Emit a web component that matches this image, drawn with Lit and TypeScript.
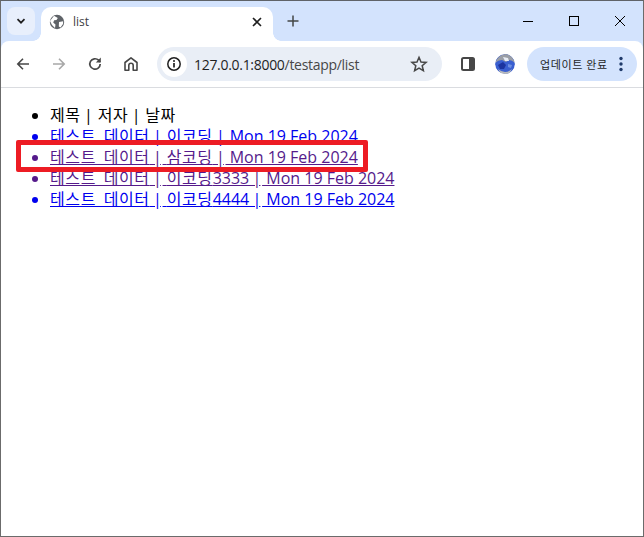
import { LitElement, html, css } from "lit";
import { customElement } from "lit/decorators.js";

const rows = [
  { t: "테스트 데이터 | 이코딩 | Mon 19 Feb 2024", v: false },
  { t: "테스트 데이터 | 삼코딩 | Mon 19 Feb 2024", v: true, mark: true },
  { t: "테스트 데이터 | 이코딩3333 | Mon 19 Feb 2024", v: true },
  { t: "테스트 데이터 | 이코딩4444 | Mon 19 Feb 2024", v: false },
];

/* Hangul runs and pipes get their own spacing classes, to approximate the reference's Korean UI font metrics. */
function spaced(text: string) {
  return text.split(/([\uac00-\ud7a3]+(?: [\uac00-\ud7a3]+)*|\|)/).filter(Boolean).map((part) => {
    if (part === "|") return html`<span class="p">|</span>`;
    if (/[\uac00-\ud7a3]/.test(part)) return html`<span class="h">${part}</span>`;
    return part;
  });
}

@customElement("app-root")
export class AppRoot extends LitElement {
  static styles = css`
    :host { display: block; width: 644px; height: 537px; font-family: "Open Sans", "Noto Sans CJK KR", sans-serif; }
    .win { box-sizing: border-box; width: 644px; height: 537px; border: 1px solid #6b6b6b; border-top-color: #5f6368; background: #d3e3fd; display: flex; flex-direction: column; overflow: hidden; }
    .tabs { height: 40px; display: flex; align-items: flex-start; flex: none; }
    .tablist { width: 28px; height: 28px; margin: 6px 0 0 6px; border-radius: 8px; background: #e8effc; display: flex; align-items: center; justify-content: center; flex: none; }
    .tab { position: relative; width: 232px; height: 34px; margin: 6px 0 0 6px; background: #fff; border-radius: 10px 10px 0 0; flex: none; }
    .tab::before, .tab::after { content: ""; position: absolute; bottom: 0; width: 8px; height: 8px; }
    .tab::before { left: -8px; background: radial-gradient(circle at 0 0, #d3e3fd 7.5px, #fff 8px); }
    .tab::after { right: -8px; background: radial-gradient(circle at 100% 0, #d3e3fd 7.5px, #fff 8px); }
    .tabrow { height: 29px; display: flex; align-items: center; }
    .tab .title { font-size: 12px; color: #3c4043; margin-left: 8px; flex: 1; }
    .tab .fav { margin-left: 8px; }
    .tab .x { margin-right: 8px; }
    .plus { margin: 13px 0 0 13px; flex: none; }
    .spacer { flex: 1; }
    .caps { display: flex; height: 40px; }
    .cap { width: 46px; height: 40px; display: flex; align-items: center; justify-content: center; }
    .toolbar { height: 46px; background: #fff; border-radius: 8px 8px 0 0; display: flex; align-items: center; flex: none; border-bottom: 1px solid #dadce0; }
    .tb { width: 34px; height: 34px; display: flex; align-items: center; justify-content: center; flex: none; }
    .nav { display: flex; margin-left: 5px; gap: 2px; }
    .omni { height: 34px; width: 285px; margin-left: 9px; border-radius: 17px; background: #e9eef6; display: flex; align-items: center; flex: none; }
    .info { width: 26px; height: 26px; border-radius: 50%; background: #fff; margin-left: 4px; display: flex; align-items: center; justify-content: center; flex: none; }
    .url { margin-left: 7px; font-size: 14px; letter-spacing: -0.3px; color: #1f1f1f; flex: 1; }
    .url span { color: #474747; }
    .star { margin-right: 14px; display: flex; }
    .panel { margin-left: 9px; }
    .avatar { margin-left: 10px; width: 20px; height: 20px; border-radius: 50%; flex: none; }
    .update { margin-left: 12px; width: 110px; height: 34px; border-radius: 17px; background: #d3e3fd; display: flex; align-items: center; flex: none; box-sizing: border-box; padding-left: 13px; }
    .update span { font-size: 11px; letter-spacing: 0.6px; color: #1f1f1f; flex: 1; white-space: nowrap; }
    .update svg { margin-right: 14px; }
    .page { flex: 1; font-size: 16px; color: #000; background: #fff; }
    ul { margin: 17px 0 0; padding-left: 49px; line-height: 21px; list-style: disc; }
    li { white-space: nowrap; }
    li.marked { position: relative; }
    a { color: #00e; text-decoration: underline; }
    li.v, li.v a { color: #551a8b; }
    li.l { color: #00e; }
    .h { letter-spacing: 0.6px; word-spacing: 3px; }
    .p { letter-spacing: -1px; margin-left: -0.8px; margin-right: 1.7px; }
    .mark { position: absolute; left: -34px; top: -7px; width: 352px; height: 32px; box-sizing: border-box; border: 5px solid #ed1c24; border-radius: 2px; }
  `;

  render() {
    return html`<div class="win">
      <div class="tabs">
        <div class="tablist">
          <svg width="12" height="12" viewBox="0 0 12 12"><path d="M2.500 4.200 6 7.700l3.500-3.500" fill="none" stroke="#1f1f1f" stroke-width="1.700"/></svg>
        </div>
        <div class="tab"><div class="tabrow">
          <svg class="fav" width="16" height="16" viewBox="0 0 16 16"><circle cx="8" cy="8" r="7.200" fill="#5f6368"/><path d="M5 1.800 8.800 4 7.500 6 5.200 6.300 4.200 8.500 6.500 10.500 6 14 3 11 1 7ZM10 8l4.200-.8L14 10l-2.500 3.500L9.800 12.500Z" fill="#fff"/></svg>
          <span class="title">list</span>
          <svg class="x" width="16" height="16" viewBox="0 0 16 16"><path d="M4 4l8 8M12 4l-8 8" stroke="#1f1f1f" stroke-width="1.600" fill="none"/></svg>
        </div></div>
        <svg class="plus" width="14" height="14" viewBox="0 0 14 14"><path d="M7 1.500v11M1.500 7h11" stroke="#444746" stroke-width="1.500" fill="none"/></svg>
        <div class="spacer"></div>
        <div class="caps">
          <div class="cap"><svg width="12" height="12" viewBox="0 0 12 12"><path d="M1 6.500h10" stroke="#000" fill="none"/></svg></div>
          <div class="cap"><svg width="12" height="12" viewBox="0 0 12 12"><rect x="1.500" y="1.500" width="9" height="9" stroke="#000" fill="none"/></svg></div>
          <div class="cap"><svg width="12" height="12" viewBox="0 0 12 12"><path d="M1 1l10 10M11 1 1 11" stroke="#000" fill="none"/></svg></div>
        </div>
      </div>
      <div class="toolbar">
        <div class="nav">
          <div class="tb"><svg width="16" height="16" viewBox="0 0 16 16"><path d="M14 8H3M8 2.800 2.800 8 8 13.200" stroke="#474747" stroke-width="1.600" fill="none"/></svg></div>
          <div class="tb"><svg width="16" height="16" viewBox="0 0 16 16"><path d="M2 8h11M8 2.800 13.200 8 8 13.200" stroke="#a8a8a8" stroke-width="1.600" fill="none"/></svg></div>
          <div class="tb"><svg width="16" height="16" viewBox="0 0 16 16"><path d="M13.200 8a5.200 5.200 0 1 1-1.600-3.800L13 6" stroke="#474747" stroke-width="1.700" fill="none"/><path d="M13.800 1.600v5h-5z" fill="#474747"/></svg></div>
          <div class="tb"><svg width="16" height="16" viewBox="0 0 16 16"><path d="M2 14.200V6.500L8 1.800l6 4.700v7.700H10.200V9.500a2.200 2.200 0 0 0-4.400 0v4.700Z" stroke="#474747" stroke-width="1.600" fill="none" stroke-linejoin="round"/></svg></div>
        </div>
        <div class="omni">
          <div class="info"><svg width="16" height="16" viewBox="0 0 16 16"><circle cx="8" cy="8" r="6.200" stroke="#1f1f1f" stroke-width="1.500" fill="none"/><path d="M8 7v4.500" stroke="#1f1f1f" stroke-width="1.700"/><circle cx="8" cy="4.900" r="1" fill="#1f1f1f"/></svg></div>
          <div class="url">127.0.0.1:8000<span>/testapp/list</span></div>
          <div class="star"><svg width="18" height="18" viewBox="0 0 18 18"><path d="M9 2.300l2 4.700 5.100.4-3.900 3.300 1.200 5L9 13.100l-4.400 2.600 1.200-5L1.900 7.400 7 7Z" stroke="#474747" stroke-width="1.500" fill="none"/></svg></div>
        </div>
        <div class="tb panel"><svg width="16" height="16" viewBox="0 0 16 16"><rect x="2" y="2" width="12" height="12" rx="1.500" stroke="#474747" stroke-width="2" fill="none"/><rect x="9" y="2" width="5" height="12" fill="#474747"/></svg></div>
        <svg class="avatar" viewBox="0 0 20 20"><circle cx="10" cy="10" r="10" fill="#3a5fd0"/><path d="M0 9Q3 1 10 0q7 0 10 9-3-3-6-3l-3 2-4-2Q3 6 0 9Z" fill="#9a9ea6"/><path d="M3 11l5-3 3 3-2 4-4 0Z" fill="#1c349f"/><path d="M13 10l4 1-1 3-3-1Z" fill="#6f8fe0"/><path d="M3 15q7 6 14 0l-3 5H6Z" fill="#b8babc"/><path d="M8 3l5 1 1 3-4 0Z" fill="#e8edf6"/></svg>
        <div class="update"><span>업데이트 완료</span><svg width="4" height="16" viewBox="0 0 4 16"><circle cx="2" cy="2.500" r="1.700" fill="#1f3a6a"/><circle cx="2" cy="8" r="1.700" fill="#1f3a6a"/><circle cx="2" cy="13.500" r="1.700" fill="#1f3a6a"/></svg></div>
      </div>
      <div class="page">
        <ul>
          <li>${spaced("제목 | 저자 | 날짜")}</li>
          ${rows.map((r) => html`<li class="${r.v ? "v" : "l"} ${r.mark ? "marked" : ""}"><a href="#">${spaced(r.t)}</a>${r.mark ? html`<span class="mark"></span>` : ""}</li>`)}
        </ul>
      </div>
    </div>`;
  }
}
